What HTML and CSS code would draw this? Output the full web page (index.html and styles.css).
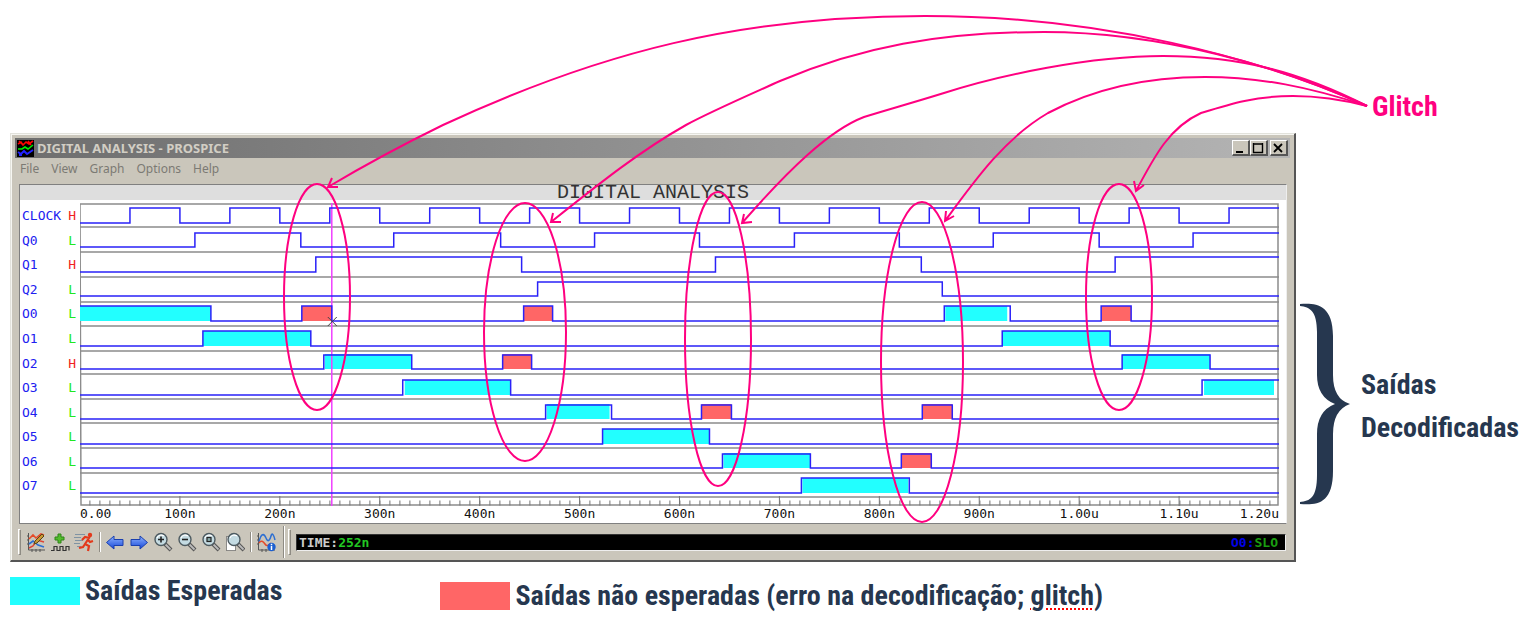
FILE: index.html
```html
<!DOCTYPE html>
<html lang="pt-BR">
<head>
<meta charset="utf-8">
<title>Digital Analysis - Glitch</title>
<link rel="stylesheet" href="styles.css">
</head>
<body>
<main class="figure">
  <p class="note glitch-label">Glitch</p>

  <section class="window">
    <header class="titlebar">
      <svg class="app-icon" viewBox="0 0 17 17" aria-hidden="true">
        <rect width="17" height="17" fill="#000"/>
        <path d="M1 4l3-2 2 3 3-3 3 2 4-3M2 1l3 3M11 1l3 4" fill="none" stroke="#f00" stroke-width="1.600"/>
        <path d="M1 9h4l3-2 3 2 5-4" fill="none" stroke="#0e0" stroke-width="1.600"/>
        <path d="M1 12l3 2 3-3 3 3 6-4M2 15h3" fill="none" stroke="#22f" stroke-width="2"/>
      </svg>
      <h1 class="window-title">DIGITAL ANALYSIS - PROSPICE</h1>
      <div class="window-buttons">
        <button class="win-btn" aria-label="Minimize"><svg viewBox="0 0 14 12"><path d="M3 10h7" stroke="#000" stroke-width="2"/></svg></button>
        <button class="win-btn" aria-label="Maximize"><svg viewBox="0 0 14 12"><path d="M2.500 1v9.500h9V1M2 2h10" fill="none" stroke="#000" stroke-width="1.400"/></svg></button>
        <button class="win-btn win-close" aria-label="Close"><svg viewBox="0 0 14 12"><path d="M3 2l8 8M11 2l-8 8" stroke="#000" stroke-width="1.800"/></svg></button>
      </div>
    </header>
    <nav class="menu">
      <button>File</button><button>View</button><button>Graph</button><button>Options</button><button>Help</button>
    </nav>

    <div class="graph">
      <h2 class="graph-title">DIGITAL ANALYSIS</h2>
      <div class="graph-body">
        <ul class="signals">
          <li>CLOCK <b class="high">H</b></li>
          <li>Q0 <b>L</b></li>
          <li>Q1 <b class="high">H</b></li>
          <li>Q2 <b>L</b></li>
          <li>O0 <b>L</b></li>
          <li>O1 <b>L</b></li>
          <li>O2 <b class="high">H</b></li>
          <li>O3 <b>L</b></li>
          <li>O4 <b>L</b></li>
          <li>O5 <b>L</b></li>
          <li>O6 <b>L</b></li>
          <li>O7 <b>L</b></li>
        </ul>
        <svg class="plot" viewBox="0 0 1200 303" preserveAspectRatio="none" role="img" aria-label="Waveforms">
          <path class="grid" d="M0 1H1199V302H1ZM0 24H1200M0 49H1200M0 74H1200M0 99H1200M0 123H1200M0 148H1200M0 171H1200M0 196H1200M0 220H1200M0 245H1200M0 270H1200M0 294H1200"/>
          <path class="major" d="M100 293V303M200 293V303M300 293V303M400 293V303M500 293V303M600 293V303M700 293V303M800 293V303M900 293V303M1000 293V303M1100 293V303"/>
          <line class="minor" x1="9.400" y1="300" x2="1200" y2="300"/>
          <g class="expected">
            <rect x="0" y="103" width="131" height="15"/><rect x="866" y="103" width="62" height="15"/>
            <rect x="123" y="128" width="108" height="15"/><rect x="923" y="128" width="108" height="15"/>
            <rect x="245" y="151" width="87" height="15"/><rect x="1043" y="151" width="88" height="15"/>
            <rect x="325" y="177" width="106" height="15"/><rect x="1125" y="177" width="70" height="15"/>
            <rect x="467" y="201" width="63" height="15"/>
            <rect x="523" y="226" width="107" height="15"/>
            <rect x="644" y="250" width="87" height="15"/>
            <rect x="723" y="275" width="106" height="15"/>
          </g>
          <g class="unexpected">
            <rect x="222" y="103" width="30" height="15"/><rect x="444" y="103" width="29" height="15"/><rect x="1022" y="103" width="30" height="15"/>
            <rect x="423" y="151" width="29" height="15"/>
            <rect x="622" y="201" width="30" height="15"/><rect x="843" y="201" width="30" height="15"/>
            <rect x="822" y="250" width="30" height="15"/>
          </g>
          <line class="cursor" x1="252" y1="0" x2="252" y2="303"/>
          <g class="wave">
            <path d="M0 20H50V5H100V20H150V5H200V20H250V5H300V20H350V5H400V20H450V5H500V20H550V5H600V20H650V5H700V20H750V5H800V20H850V5H900V20H950V5H1000V20H1050V5H1100V20H1150V5H1200"/>
            <path d="M0 44H115V30H221V44H314V30H421V44H515V30H620V44H715V30H820V44H914V30H1020V44H1114V30H1200"/>
            <path d="M0 69H236V54H442V69H636V54H842V69H1036V54H1200"/>
            <path d="M0 93H458V79H863V93H1200"/>
            <path d="M0 103H131V118H222V103H252V118H444V103H473V118H865V103H931V118H1022V103H1052V118H1200"/>
            <path d="M0 143H123V128H231V143H923V128H1031V143H1200"/>
            <path d="M0 166H244V152H332V166H423V152H452V166H1043V152H1131V166H1200"/>
            <path d="M0 192H323V177H431V192H1123V177H1200"/>
            <path d="M0 216H466V202H532V216H622V202H652V216H843V202H873V216H1200"/>
            <path d="M0 241H523V226H630V241H1200"/>
            <path d="M0 265H643V251H731V265H822V251H852V265H1200"/>
            <path d="M0 290H722V275H830V290H1200"/>
          </g>
          <path class="marker" d="M248 114l9 9M257 114l-9 9"/>
        </svg>
        <ol class="axis">
          <li>0.00</li><li>100n</li><li>200n</li><li>300n</li><li>400n</li><li>500n</li><li>600n</li><li>700n</li><li>800n</li><li>900n</li><li>1.00u</li><li>1.10u</li><li>1.20u</li>
        </ol>
      </div>
    </div>

    <footer class="toolbar">
      <svg class="defs" aria-hidden="true"><defs>
        <linearGradient id="blue" x1="0" y1="0" x2="0" y2="1"><stop offset="0" stop-color="#8fb4ff"/><stop offset="1" stop-color="#1546d8"/></linearGradient>
        <g id="lens"><path d="M12 12l6 6" stroke="#555" stroke-width="4"/><path d="M12.500 12.500l5 5" stroke="#bbb" stroke-width="1.800"/><circle cx="8" cy="7.500" r="6" fill="#c4dbe2" stroke="#4d5a60" stroke-width="1.400"/><path d="M4 6a4.500 4.500 0 0 1 7-2" fill="none" stroke="#fff" stroke-width="1.200"/></g>
      </defs></svg>
      <span class="grip"></span>
      <div class="tools">
        <button aria-label="Edit graph"><svg viewBox="0 0 20 20"><path d="M2.500 1v17H19M1 4h2M1 8h2M1 12h2M6 17v3M10 17v3M14 17v3" fill="none" stroke="#555"/><path d="M3 7l4-4 3 3 5-4 3 1" fill="none" stroke="#e54a28" stroke-width="1.600"/><path d="M3 12l4-3 5 4 6 2" fill="none" stroke="#2d6fd2" stroke-width="1.600"/><path d="M3 16l4-2 4-6 7 2" fill="none" stroke="#d43" stroke-width="1.400"/><path d="M8 12l1-3 7-7 2 2-7 7z" fill="#c99a35" stroke="#5b4517"/></svg></button>
        <button aria-label="Add trace"><svg viewBox="0 0 20 20"><path d="M8 2h3v3h3v3h-3v3H8V8H5V5h3z" fill="#52bd2c" stroke="#2e8418"/><path d="M1 18.500h3v-4h3v4h3v-4h3v4h3v-4h3v4" fill="none" stroke="#333" stroke-width="1.200"/></svg></button>
        <button aria-label="Simulate graph"><svg viewBox="0 0 20 20"><path d="M1 2.500h10M0 5.500h7M1 8.500h8M0 11.500h6M3 14.500h4" stroke="#7f93a3" stroke-width="1.200"/><circle cx="16" cy="3" r="2.200" fill="#e3391b"/><path d="M8 8l3-3 4 1-4 6 4 2-1 5M11 12l-2 3-4 1M14 8l2 2 3-1" fill="none" stroke="#e3391b" stroke-width="2.200"/></svg></button>
      </div>
      <span class="sep"></span>
      <div class="tools">
        <button aria-label="Pan left"><svg viewBox="0 0 20 20"><path d="M1.500 10.500L9 4v3.500h9v6H9V17z" fill="url(#blue)" stroke="#1a3fae"/></svg></button>
        <button aria-label="Pan right"><svg viewBox="0 0 20 20"><path d="M18.500 10.500L11 4v3.500H2v6h9V17z" fill="url(#blue)" stroke="#1a3fae"/></svg></button>
        <button aria-label="Zoom in"><svg viewBox="0 0 20 20"><use href="#lens"/><path d="M5 7.500h6M8 4.500v6" stroke="#222" stroke-width="1.600"/></svg></button>
        <button aria-label="Zoom out"><svg viewBox="0 0 20 20"><use href="#lens"/><path d="M5 7.500h6" stroke="#222" stroke-width="1.600"/></svg></button>
        <button aria-label="Zoom all"><svg viewBox="0 0 20 20"><use href="#lens"/><rect x="6" y="5.500" width="4" height="4" fill="#8aa" stroke="#222" stroke-width="1.200"/></svg></button>
        <button aria-label="Zoom area"><svg viewBox="0 0 20 20"><path d="M1.500 4.500h9v14h-9z" fill="#fff" stroke="#333" stroke-dasharray="1 1"/><use href="#lens" x="1"/></svg></button>
      </div>
      <span class="sep"></span>
      <div class="tools">
        <button aria-label="View log"><svg viewBox="0 0 20 20"><path d="M2.500 1v17H19M1 4h2M1 8h2M1 12h2M6 17v3M10 17v3" fill="none" stroke="#555"/><path d="M3 10c2-9 5-9 7-4s4 2 5-2 3-1 4 4" fill="none" stroke="#2d6fd2" stroke-width="1.500"/><path d="M3 11c2-3 4-2 6 1s4 1 6-1" fill="none" stroke="#e54a28" stroke-width="1.500"/><circle cx="15.500" cy="15" r="4.200" fill="#1c5fd0"/><path d="M15.500 14v4M15.500 11.800v1.400" stroke="#fff" stroke-width="1.500"/></svg></button>
      </div>
      <span class="sep tall"></span>
      <span class="grip"></span>
      <div class="status"><span>TIME:<b class="time">252n</b></span><span class="probe">O0:<b>SLO</b></span></div>
    </footer>
  </section>

  <aside class="outputs">
    <svg class="brace" viewBox="0 0 50 202" aria-hidden="true"><path d="M0 1C14 0 33 0 33 33V72Q33 96 50 101Q33 107 33 131V168C33 202 16 202 0 201V199C10 198 17 195 17 172V131Q17 108 35 101Q17 94 17 72V29C17 8 10 4 0 3Z"/></svg>
    <p class="note outputs-label">Saídas<br>Decodificadas</p>
  </aside>

  <footer class="legend">
    <div class="legend-item"><span class="swatch cyan"></span><p class="note">Saídas Esperadas</p></div>
    <div class="legend-item second"><span class="swatch red"></span><p class="note">Saídas não esperadas (erro na decodificação; <span class="misspelt">glitch</span>)</p></div>
  </footer>

  <svg class="annotations" viewBox="0 0 1528 625" preserveAspectRatio="none" aria-hidden="true">
    <ellipse cx="317" cy="297" rx="33" ry="113"/>
    <ellipse cx="525" cy="332" rx="41" ry="129"/>
    <ellipse cx="718" cy="339" rx="33" ry="147"/>
    <ellipse cx="922" cy="362" rx="41" ry="160"/>
    <ellipse cx="1119" cy="297" rx="33" ry="113"/>
    <path d="M1367 106C1258 57 1100 16 925 16C740 16 600 52 443 125C400 146 370 162 328 187M332 178L328 187L338 187"/>
    <path d="M1367 106C1280 66 1160 32 1044 32C940 32 860 47 780 81C740 99 710 112 686 125C640 151 600 183 551 222M553 213L551 222L561 222"/>
    <path d="M1367 106C1300 72 1240 56 1163 56C1090 56 1000 75 944 93C915 102 890 109 864 117C830 130 790 168 742 223M744 214L742 223L752 222"/>
    <path d="M1367 106C1310 87 1260 77 1205 77C1150 77 1095 88 1048 113C1005 138 975 180 945 221M946 211L945 221L954 216"/>
    <path d="M1367 106C1340 99 1320 96 1293 96C1255 96 1230 104 1201 113C1170 127 1155 155 1136 191M1134 181L1136 191L1144 185"/>
  </svg>
</main>
</body>
</html>
```
FILE: styles.css
```css
* { box-sizing: border-box; }
body { margin: 0; background: #fff; font-family: "Open Sans", sans-serif; }
h1, h2, p, ul, ol { margin: 0; padding: 0; list-style: none; }
button { padding: 0; border: 0; background: none; font: inherit; color: inherit; }

.figure {
  position: relative;
  display: grid;
  grid-template-columns: minmax(0, 1fr) 232px;
  grid-template-rows: 133px auto auto;
  align-content: start;
  min-height: 625px;
  padding-left: 10px;
}
.note {
  font: bold 28px/43px "Liberation Sans Narrow", "Roboto Condensed", "Open Sans Condensed", Roboto, sans-serif;
  color: #26374f;
}
.glitch-label { grid-column: 2; padding: 85px 0 0 76px; color: #ff0080; }

.window {
  grid-column: 1;
  padding: 4px 4px 0;
  background: #cac6bb;
  border: 1px solid #e2e2dc;
  border-right: 2px solid #555;
  border-bottom: 2px solid #555;
  box-shadow: inset 1px 1px #f6f6f2;
}
.titlebar {
  display: flex;
  align-items: center;
  height: 20px;
  padding: 0 2px;
  gap: 3px;
  background: linear-gradient(90deg, #6e6e6e, #b4b4b4);
}
.app-icon { width: 17px; height: 17px; }
.window-title { flex: 1; font: bold 13px/18px "Noto Sans", sans-serif; color: #d2cec4; }
.window-buttons { display: flex; }
.win-btn {
  width: 18px;
  height: 16px;
  background: #cac6bb;
  border: 1px solid #fff;
  border-right: 2px solid #555;
  border-bottom: 2px solid #555;
}
.win-btn svg { display: block; width: 14px; height: 12px; }
.win-close { margin-left: 2px; }
.menu { display: flex; gap: 12px; height: 26px; padding: 0 5px; font: 12px/22px "Noto Sans", sans-serif; color: #7c7a74; }
.menu button { align-self: flex-start; }

.graph { margin: 0 3px 0 4px; background: #fff; border: 1px solid #808080; border-right-color: #eee; }
.graph-title {
  height: 15px;
  background: #dedede;
  font: 20px/16px "Liberation Mono", monospace;
  text-align: center;
  color: #333;
}
.graph-body {
  display: grid;
  grid-template-columns: 60px minmax(0, 1fr);
  padding: 3px 7px 0 0;
}
.signals {
  display: grid;
  grid-template-rows: repeat(12, minmax(0, 1fr));
  height: 296px;
  padding: 1px 4px 0 2px;
  font: 13px/24px "DejaVu Sans Mono", monospace;
  color: #2020f0;
}
.signals li { display: flex; justify-content: space-between; }
.signals b { font-weight: normal; color: #20e820; }
.signals .high { color: #f02020; }
.plot { display: block; width: 100%; height: 303px; }
.plot * { vector-effect: non-scaling-stroke; }
.grid { fill: none; stroke: #8c8c8c; stroke-width: 1.5px; }
.major { stroke: #777; stroke-width: 1px; }
.minor { stroke: #777; stroke-width: 5px; stroke-dasharray: 1 9; }
.expected { fill: #22ffff; }
.unexpected { fill: #ff6666; }
.cursor { stroke: #f040ff; stroke-width: 1.5px; }
.wave { fill: none; stroke: #2a22f8; stroke-width: 1.5px; }
.plot .marker { fill: none; stroke: #444; }
.axis {
  grid-column: 2;
  display: grid;
  grid-template-columns: repeat(24, minmax(0, 1fr));
  height: 17px;
  font: 13px/15px "DejaVu Sans Mono", monospace;
  color: #111;
}
.axis li { grid-column: span 2; display: flex; justify-content: center; }
.axis li:first-child { grid-column: span 1; justify-content: flex-start; }
.axis li:last-child { grid-column: span 1; justify-content: flex-end; }

.toolbar { display: flex; align-items: center; height: 36px; padding: 0 4px 0 3px; }
.defs { position: absolute; width: 0; height: 0; }
.grip { width: 3px; height: 26px; margin-right: 5px; border: 1px solid #8e8b83; border-top-color: #fff; border-left-color: #fff; }
.tools { display: flex; gap: 4px; }
.tools button { width: 20px; height: 20px; }
.tools svg { display: block; width: 20px; height: 20px; }
.sep { width: 2px; height: 20px; margin: 0 4px 0 5px; border-left: 1px solid #8e8b83; border-right: 1px solid #fff; }
.sep.tall { height: 32px; margin: 0 3px 0 7px; }
.status {
  flex: 1;
  display: flex;
  justify-content: space-between;
  height: 17px;
  padding: 0 7px 0 2px;
  background: #000;
  border: 1px solid #333;
  border-bottom-color: #eee;
  border-right-color: #eee;
  font: bold 13px/15px "DejaVu Sans Mono", monospace;
  color: #ccc;
}
.time { color: #22c822; }
.probe { color: #0000e8; }
.probe b { color: #1a9e10; }

.outputs { grid-column: 2; display: flex; align-items: center; gap: 11px; align-self: start; padding: 170px 0 0 4px; }
.outputs-label { padding-top: 3px; }
.brace { flex: none; width: 50px; height: 202px; fill: #26374f; }

.legend { grid-column: 1 / -1; display: flex; padding-top: 7px; }
.legend-item { display: flex; align-items: center; gap: 5px; height: 43px; }
.legend-item.second { margin: 5px 0 0 158px; }
.swatch { width: 70px; height: 28px; }
.cyan { background: #22ffff; }
.red { background: #ff6666; }
.misspelt { text-decoration: underline dotted #f00 2px; text-underline-offset: 3px; }

.annotations { position: absolute; top: 0; left: 0; width: 100%; height: 625px; fill: none; stroke: #ff0080; stroke-width: 2px; pointer-events: none; }
.annotations * { vector-effect: non-scaling-stroke; }
```
